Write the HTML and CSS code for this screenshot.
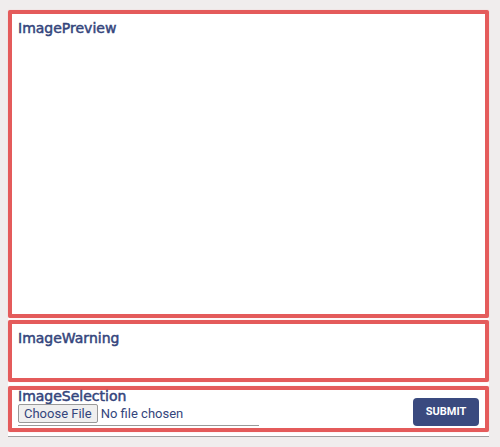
FILE: index.html
```
<!DOCTYPE html>
<html lang="en">
<head>
<meta charset="utf-8">
<title>Image upload</title>
<link rel="stylesheet" href="styles.css">
</head>
<body>
<form class="uploader">
  <section class="panel preview"><h2>ImagePreview</h2></section>
  <section class="panel warning"><h2>ImageWarning</h2></section>
  <section class="panel selection">
    <div class="field">
      <h2><label for="image-file">ImageSelection</label></h2>
      <input id="image-file" class="file" type="file">
    </div>
    <button class="submit" type="button">SUBMIT</button>
  </section>
</form>
</body>
</html>
```
FILE: styles.css
```
* {
  box-sizing: border-box;
}

body {
  margin: 0;
  padding: 10px 11px 10px 8px;
  background: #f0eded;
  color: #34457c;
  font-family: Roboto, Arial, sans-serif;
}

.uploader {
  padding-bottom: 4px;
  border-bottom: 1px solid #a0a0a0;
  background: #fff;
}

.panel {
  border: 4px solid #e45b5b;
  border-radius: 2px;
  padding: 6px;
  background: #fff;
  box-shadow: 0 0 1px #efaaaa;
}

h2 {
  margin: 0;
  font: 14px/16px "DejaVu Sans", Verdana, sans-serif;
  -webkit-text-stroke: 0.5px currentColor;
}

.preview {
  min-height: 308px;
}

.warning {
  min-height: 62px;
  margin-top: 2px;
}

.selection {
  display: flex;
  align-items: flex-end;
  justify-content: space-between;
  min-height: 46px;
  margin-top: 4px;
  padding: 0 6px 2px;
}

.selection h2 {
  margin-bottom: 2px;
  line-height: 12px;
}

.field {
  flex: 0 1 241px;
  min-width: 0;
}

.file {
  display: block;
  width: 100%;
  height: 22px;
  border-bottom: 1px solid #999;
  color: #34457c;
  font: 13px/16px Roboto, Arial, sans-serif;
}

.file::file-selector-button {
  height: 19px;
  margin: 0 3px 0 0;
  padding: 0 5px;
  border: 1px solid #999;
  border-radius: 2px;
  background: #efefef;
  color: #34457c;
  font: inherit;
}

.submit {
  width: 66px;
  height: 28px;
  padding: 0;
  border: 0;
  border-radius: 4px;
  background: #3a4a7f;
  color: #fff;
  font: 700 11px/16px Roboto, sans-serif;
}
```
